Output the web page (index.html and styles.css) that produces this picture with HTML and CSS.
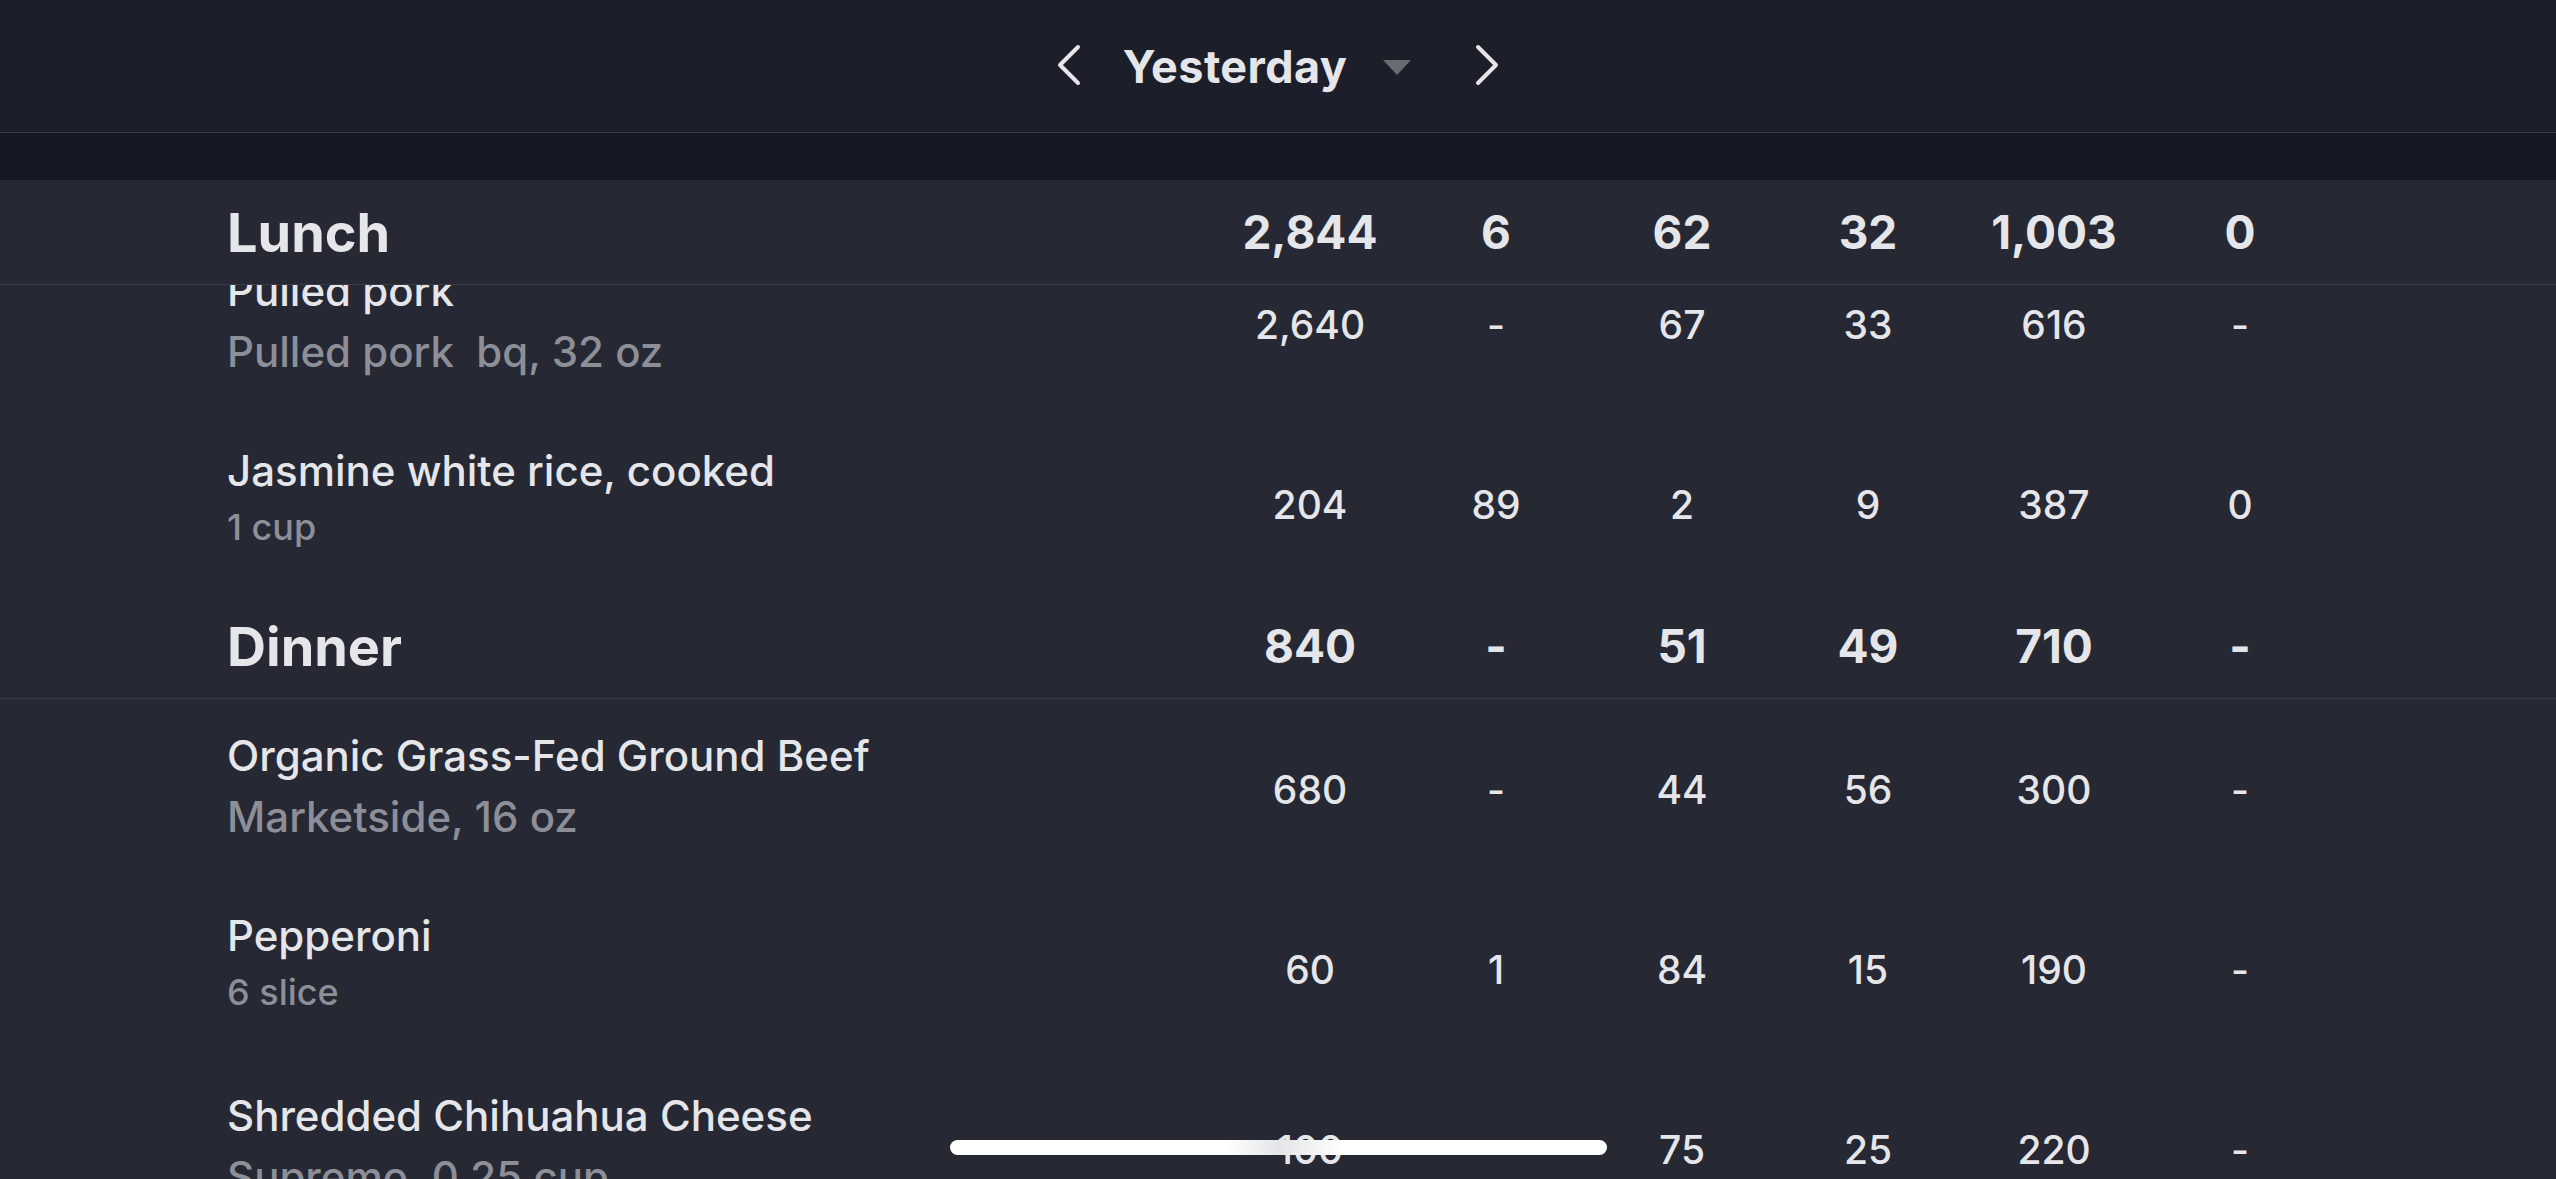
FILE: index.html
```html
<!DOCTYPE html>
<html lang="en">

<head>
    <meta charset="UTF-8">
    <meta name="viewport" content="width=device-width, initial-scale=1.0">
    <title>Food Log - Yesterday</title>
    <link rel="stylesheet" href="styles.css">
</head>

<body>
    <!-- date switcher -->
    <div class="topbar">
        <svg class="chevron" width="26" height="42" viewBox="0 0 26 42">
            <path d="M22 3 L4 21 L22 39" />
        </svg>
        <span class="day-title">Yesterday</span>
        <svg class="caret" width="30" height="15" viewBox="0 0 30 15">
            <path d="M1 0 H29 L15 15 Z" />
        </svg>
        <svg class="chevron next" width="26" height="42" viewBox="0 0 26 42">
            <path d="M4 3 L22 21 L4 39" />
        </svg>
    </div>
    <div class="spacer"></div>

    <div class="log">
        <!-- Lunch -->
        <div class="meal-row sticky">
            <div class="meal-name">Lunch</div>
            <div class="num">2,844</div>
            <div class="num">6</div>
            <div class="num">62</div>
            <div class="num">32</div>
            <div class="num">1,003</div>
            <div class="num">0</div>
        </div>
        <div class="item-row under">
            <div class="item-name">
                <div class="title">Pulled pork</div>
                <div class="sub big">Pulled pork&nbsp; bq, 32 oz</div>
            </div>
            <div class="num">2,640</div>
            <div class="num">-</div>
            <div class="num">67</div>
            <div class="num">33</div>
            <div class="num">616</div>
            <div class="num">-</div>
        </div>
        <div class="item-row">
            <div class="item-name">
                <div class="title">Jasmine white rice, cooked</div>
                <div class="sub">1 cup</div>
            </div>
            <div class="num">204</div>
            <div class="num">89</div>
            <div class="num">2</div>
            <div class="num">9</div>
            <div class="num">387</div>
            <div class="num">0</div>
        </div>

        <!-- Dinner -->
        <div class="meal-row">
            <div class="meal-name">Dinner</div>
            <div class="num">840</div>
            <div class="num">-</div>
            <div class="num">51</div>
            <div class="num">49</div>
            <div class="num">710</div>
            <div class="num">-</div>
        </div>
        <div class="item-row">
            <div class="item-name">
                <div class="title">Organic Grass-Fed Ground Beef</div>
                <div class="sub big">Marketside, 16 oz</div>
            </div>
            <div class="num">680</div>
            <div class="num">-</div>
            <div class="num">44</div>
            <div class="num">56</div>
            <div class="num">300</div>
            <div class="num">-</div>
        </div>
        <div class="item-row">
            <div class="item-name">
                <div class="title">Pepperoni</div>
                <div class="sub">6 slice</div>
            </div>
            <div class="num">60</div>
            <div class="num">1</div>
            <div class="num">84</div>
            <div class="num">15</div>
            <div class="num">190</div>
            <div class="num">-</div>
        </div>
        <div class="item-row">
            <div class="item-name">
                <div class="title">Shredded Chihuahua Cheese</div>
                <div class="sub big">Supremo, 0.25 cup</div>
            </div>
            <div class="num">100</div>
            <div class="num">-</div>
            <div class="num">75</div>
            <div class="num">25</div>
            <div class="num">220</div>
            <div class="num">-</div>
        </div>
    </div>

    <div class="home-bar"></div>
</body>

</html>
```

FILE: styles.css
```css
html, body {
    height: 100%;
}

body {
    font-family: Inter, "Noto Sans", sans-serif;
    margin: 0;
    padding: 0;
    background-color: #262833;
    color: #e5e6e9;
    overflow: hidden;
}

.topbar {
    height: 132px;
    display: flex;
    justify-content: center;
    align-items: center;
    background-color: #1c1e29;
    border-bottom: 1px solid #383a46;
}

.chevron {
    margin-top: -2px;
    fill: none;
    stroke: #e5e6e9;
    stroke-width: 4;
    stroke-linecap: round;
    stroke-linejoin: round;
}

.chevron.next {
    margin-left: 62px;
}

.day-title {
    margin-left: 41px;
    font-size: 45px;
    font-weight: 700;
    letter-spacing: 0.4px;
}

.caret {
    margin-left: 35px;
    margin-top: 2px;
    fill: #6a6c74;
}

.spacer {
    height: 47px;
    background-color: #161824;
}

.log {
    height: 1000px;
    overflow: hidden;
}

.meal-row,
.item-row {
    display: flex;
    align-items: center;
    padding: 0 223px 0 227px;
}

.meal-row {
    height: 104px;
    border-bottom: 1px solid #3a3c48;
    font-weight: 700;
}

.meal-row.sticky {
    position: sticky;
    top: 0;
    background-color: #262833;
}

.meal-name {
    flex: 1;
    font-size: 54px;
}

.meal-row .num {
    font-size: 46px;
}

.item-row {
    height: 180px;
    font-weight: 500;
}

/* the first row is half hidden under the sticky meal header */
.item-row.under {
    margin-top: -51px;
}

.item-name {
    flex: 1;
    align-self: flex-start;
    padding-top: 32px;
}

.title {
    font-size: 42px;
    line-height: 50px;
}

.sub {
    font-size: 36px;
    line-height: 44px;
    margin-top: 9px;
    color: #8d8f98;
}

.sub.big {
    font-size: 42px;
    line-height: 50px;
    margin-top: 11px;
}

.num {
    width: 186px;
    text-align: center;
    font-size: 39px;
}

.home-bar {
    position: absolute;
    left: 50%;
    bottom: 24px;
    width: 657px;
    height: 15px;
    margin-left: -328px;
    border-radius: 8px;
    background: linear-gradient(90deg, #fff 0, #fff 42%, #e4e5e8 50%, #fff 60%, #fff 100%);
}
```
